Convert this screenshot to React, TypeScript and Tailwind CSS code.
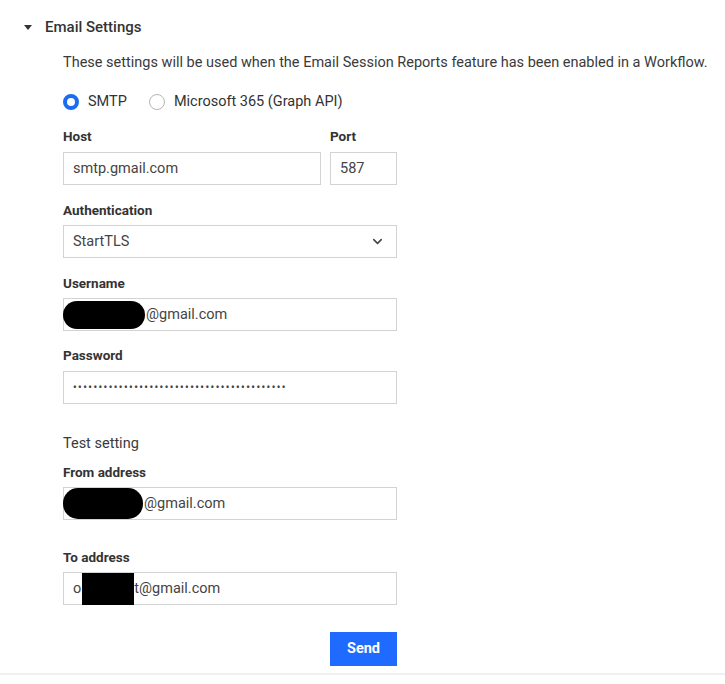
import { ChevronDown } from 'lucide-react';

function Label({ children, className = '' }: { children: React.ReactNode; className?: string }) {
  return <div className={`text-[13.5px] font-bold leading-4 text-[#333] ${className}`}>{children}</div>;
}

function Field({ children, className = '' }: { children: React.ReactNode; className?: string }) {
  return (
    <div
      className={`flex h-[33px] items-center border border-[#d3d3d3] bg-white px-[9px] text-[14.5px] text-[#444] ${className}`}
    >
      {children}
    </div>
  );
}

export default function App() {
  return (
    <div className="min-h-screen w-[725px] bg-white font-['Roboto',sans-serif]">
      {/* Section header */}
      <div className="flex h-5 items-center pl-6 pt-[17px] box-content">
        <span className="h-0 w-0 border-x-4 border-t-[5px] border-x-transparent border-t-[#333]" />
        <span className="ml-[13px] text-[15px] font-medium text-[#333]">Email Settings</span>
      </div>

      <div className="pl-[63px]">
        <p className="mt-4 whitespace-nowrap text-[14.5px] leading-5 text-[#3a3a3a]">
          These settings will be used when the Email Session Reports feature has been enabled in a Workflow.
        </p>

        {/* Provider */}
        <div className="mt-[19px] flex h-5 items-center text-[14.5px] text-[#333]">
          <span className="h-4 w-4 rounded-full border-[4px] border-[#1a6cf0] bg-white" />
          <span className="ml-[9px]">SMTP</span>
          <span className="ml-[22px] h-4 w-4 rounded-full border border-[#b5b5b5] bg-white" />
          <span className="ml-[9px]">Microsoft 365 (Graph API)</span>
        </div>

        <div className="w-[334px]">
          <div className="mt-4 flex gap-[9px]">
            <div className="w-[258px]">
              <Label>Host</Label>
              <Field className="mt-2">smtp.gmail.com</Field>
            </div>
            <div className="flex-1">
              <Label>Port</Label>
              <Field className="mt-2">587</Field>
            </div>
          </div>

          <Label className="mt-[17px]">Authentication</Label>
          <Field className="mt-[7px] justify-between">
            <span>StartTLS</span>
            <ChevronDown size={15} strokeWidth={2.5} className="mr-[2px] text-[#444]" />
          </Field>

          <Label className="mt-[17px]">Username</Label>
          <Field className="mt-[7px] pl-0">
            <span className="-ml-px mr-px h-[28px] w-[82px] rounded-[14px] bg-black" />
            <span>@gmail.com</span>
          </Field>

          <Label className="mt-4">Password</Label>
          <Field className="mt-2">
            <span className="text-[10px] font-bold tracking-[1.5px] text-[#444]">
              {'•'.repeat(42)}
            </span>
          </Field>

          <div className="mt-[30px] text-[14.5px] leading-5 text-[#3a3a3a]">Test setting</div>
          <Label className="mt-[10px]">From address</Label>
          <Field className="mt-[7px] pl-0">
            <span className="-ml-px mr-px h-[31px] w-[80px] rounded-[15px] bg-black" />
            <span>@gmail.com</span>
          </Field>

          <Label className="mt-[29px]">To address</Label>
          <Field className="mt-[7px]">
            <span>o</span>
            <span className="ml-px h-[32px] w-[52px] bg-black" />
            <span>t@gmail.com</span>
          </Field>

          <div className="mt-[27px] flex justify-end">
            <button className="h-[34px] w-[67px] bg-[#1f6bff] text-[14.5px] font-bold text-white">Send</button>
          </div>
        </div>
      </div>

      <div className="mt-[7px] h-[2px] w-full bg-[#f0f0f0]" />
    </div>
  );
}
